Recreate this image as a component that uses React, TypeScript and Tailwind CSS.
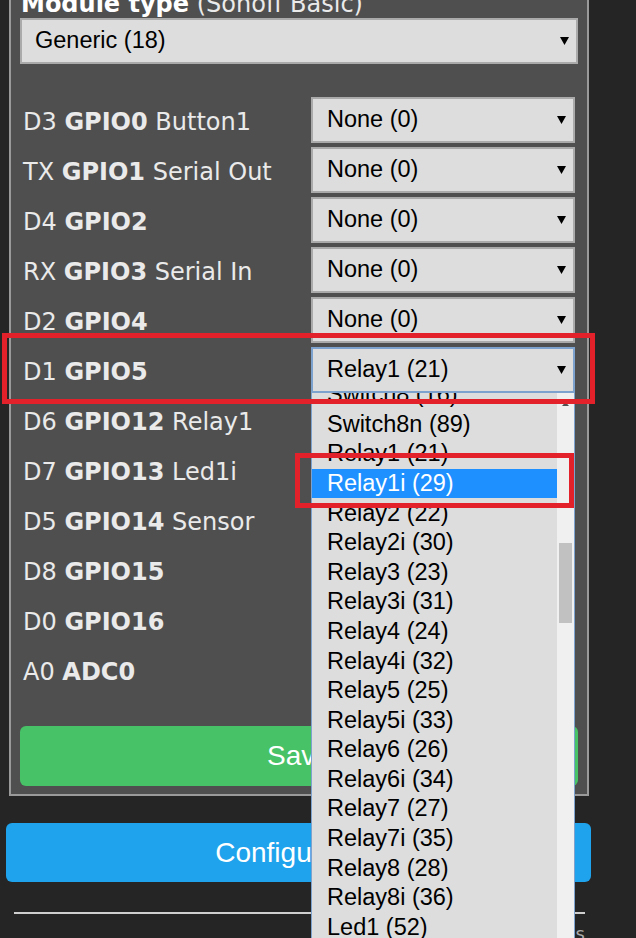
import React from "react";

type Row = {
    pin: string;
    gpio: string;
    name?: string;
    value: string;
    focused?: boolean;
};

const rows: Row[] = [
    { pin: "D3", gpio: "GPIO0", name: "Button1", value: "None (0)" },
    { pin: "TX", gpio: "GPIO1", name: "Serial Out", value: "None (0)" },
    { pin: "D4", gpio: "GPIO2", value: "None (0)" },
    { pin: "RX", gpio: "GPIO3", name: "Serial In", value: "None (0)" },
    { pin: "D2", gpio: "GPIO4", value: "None (0)" },
    { pin: "D1", gpio: "GPIO5", value: "Relay1 (21)", focused: true },
    { pin: "D6", gpio: "GPIO12", name: "Relay1", value: "None (0)" },
    { pin: "D7", gpio: "GPIO13", name: "Led1i", value: "None (0)" },
    { pin: "D5", gpio: "GPIO14", name: "Sensor", value: "None (0)" },
    { pin: "D8", gpio: "GPIO15", value: "None (0)" },
    { pin: "D0", gpio: "GPIO16", value: "None (0)" },
    { pin: "A0", gpio: "ADC0", value: "None (0)" },
];

const options = [
    "Switch8 (16)",
    "Switch8n (89)",
    "Relay1 (21)",
    "Relay1i (29)",
    "Relay2 (22)",
    "Relay2i (30)",
    "Relay3 (23)",
    "Relay3i (31)",
    "Relay4 (24)",
    "Relay4i (32)",
    "Relay5 (25)",
    "Relay5i (33)",
    "Relay6 (26)",
    "Relay6i (34)",
    "Relay7 (27)",
    "Relay7i (35)",
    "Relay8 (28)",
    "Relay8i (36)",
    "Led1 (52)",
    "Led2 (53)",
];

function Arrow() {
    return (
        <svg width="9" height="8" viewBox="0 0 9 8">
            <path d="M0 0H9L4.5 8Z" fill="#000" />
        </svg>
    );
}

function Select({ value, focused, className = "" }: { value: string; focused?: boolean; className?: string }) {
    return (
        <div
            className={`flex items-center justify-between h-[46px] bg-[#dddddd] border-2 pr-[7px] ${
                focused ? "border-[#7da2ce]" : "border-[#aaaaaa]"
            } ${className}`}
        >
            <span className="text-[23.5px] text-black font-['Liberation_Sans',Arial,sans-serif]">{value}</span>
            <Arrow />
        </div>
    );
}

export default function App() {
    return (
        <div className="relative w-[636px] h-[938px] overflow-hidden bg-[#252525] font-['DejaVu_Sans',Verdana,sans-serif]">
            {/* fieldset */}
            <div className="-mt-[11px] ml-[9px] w-[580px] border-2 border-[#9a9a9a] bg-[#4f4f4f] pb-[8px]">
                <div className="pl-[10px] text-[24px] leading-[27px] text-[#eaeaea] whitespace-nowrap">
                    <b className="text-white">Module type</b> (Sonoff Basic)
                </div>
                <div className="px-[9px]">
                    <Select value="Generic (18)" className="pl-[13px]" />
                </div>

                <div className="mt-[33px] flex flex-col gap-[4px] pl-[12px] pr-[12px]">
                    {rows.map((r) => (
                        <div key={r.gpio} className="flex items-center h-[46px]">
                            <div className="flex-1 pt-[3px] text-[24px] text-[#eaeaea] whitespace-nowrap">
                                {r.pin} <b>{r.gpio}</b>
                                {r.name ? ` ${r.name}` : ""}
                            </div>
                            <Select value={r.value} focused={r.focused} className="w-[264px] pl-[14px]" />
                        </div>
                    ))}
                </div>

                <div className="mt-[33px] mx-[9px] h-[60px] rounded-[6px] bg-[#47c266] flex items-center justify-center text-white text-[28px] font-['Liberation_Sans',Arial,sans-serif]">
                    Save
                </div>
            </div>

            <div className="mt-[27px] ml-[6px] w-[585px] h-[59px] rounded-[6px] bg-[#1fa3ec] flex items-center justify-center text-white text-[28px] font-['Liberation_Sans',Arial,sans-serif]">
                Configuration
            </div>

            <div className="mt-[30px] ml-[14px] w-[571px] h-[2px] bg-[#cfcfcf]" />
            <div className="ml-[14px] w-[571px] text-right text-[18px] leading-[24px] text-[#aaaaaa] pt-[8px]">
                Tasmota 8.1.0 by Theo Arends
            </div>

            {/* open dropdown list */}
            <div className="absolute left-[311px] top-[393px] w-[264px] bottom-0 flex bg-[#dddddd] border-x border-[#7da2ce] overflow-hidden font-['Liberation_Sans',Arial,sans-serif]">
                <div className="flex-1 overflow-hidden">
                    <div className="-mt-[13px]">
                        {options.map((o) => (
                            <div
                                key={o}
                                className={`h-[29.6px] flex items-center pl-[15px] text-[23.5px] whitespace-nowrap ${
                                    o === "Relay1i (29)" ? "bg-[#1e90ff] text-white" : "text-black"
                                }`}
                            >
                                {o}
                            </div>
                        ))}
                    </div>
                </div>
                <div className="w-[17px] bg-[#f0f0f0] flex flex-col items-center">
                    <svg width="7" height="4" viewBox="0 0 7 4" className="mt-[9px]">
                        <path d="M0 4L3.5 0L7 4Z" fill="#505050" />
                    </svg>
                    <div className="mt-[137px] w-[13px] h-[80px] bg-[#c1c1c1]" />
                </div>
            </div>

            {/* red annotations */}
            <div className="absolute left-[2px] top-[333px] w-[593px] h-[71px] border-[5px] border-[#e3212b]" />
            <div className="absolute left-[295px] top-[453px] w-[279px] h-[55px] border-[5px] border-[#e3212b]" />
        </div>
    );
}
